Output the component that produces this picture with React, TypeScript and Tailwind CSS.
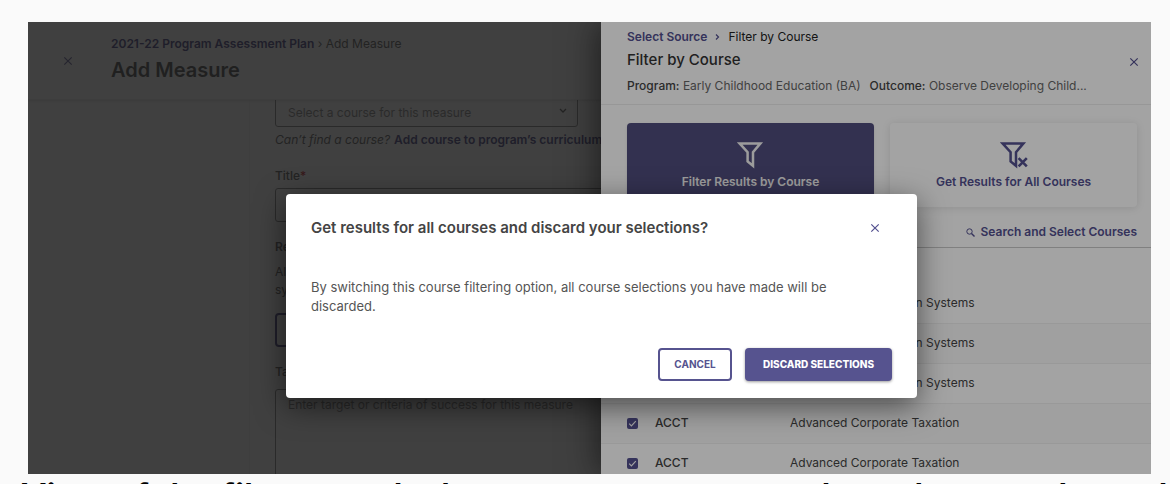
import React from "react";

const courses = [
  { code: "ACCT", name: "Accounting Information Systems" },
  { code: "ACCT", name: "Accounting Information Systems" },
  { code: "ACCT", name: "Accounting Information Systems" },
  { code: "ACCT", name: "Advanced Corporate Taxation" },
  { code: "ACCT", name: "Advanced Corporate Taxation" },
];

function CloseIcon() {
  return (
    <svg width="10" height="10" viewBox="0 0 10 10" fill="none" stroke="currentColor" strokeWidth="1.2" aria-hidden="true">
      <path d="M1.3 1.3l7.4 7.4M8.7 1.3L1.3 8.7" />
    </svg>
  );
}

function FunnelIcon({ crossed = false }: { crossed?: boolean }) {
  return (
    <svg width="28" height="28" viewBox="0 0 28 28" fill="none" stroke="currentColor" strokeWidth="2.5" aria-hidden="true">
      <path d="M2.6 2.4h20.8l-7.4 8.8v13.6L10.6 20.4v-9.2z" />
      {crossed && <path d="M18.6 17.2l8.2 8.2M26.8 17.2l-8.2 8.2" strokeWidth="2.6" />}
    </svg>
  );
}

function AddMeasurePage() {
  return (
    <div className="flex h-full flex-col bg-white text-[#444]">
      <header className="z-10 flex h-[78px] shrink-0 items-center border-b border-[#eee] shadow-sm">
        <button aria-label="Close" className="mr-[38px] ml-[35px] flex size-[10px] items-center justify-center text-[#53508f]">
          <CloseIcon />
        </button>
        <div>
          <nav className="text-[12px] leading-4">
            <a href="#plan" className="font-semibold text-[#2c2870]">2021-22 Program Assessment Plan</a>
            <span> › Add Measure</span>
          </nav>
          <h1 className="mt-[2px] text-[20px] leading-8 font-semibold text-[#333]">Add Measure</h1>
        </div>
      </header>
      <form className="ml-[221px] min-h-0 flex-1 overflow-hidden border-l border-[#f7f7f7] pl-[25px] text-[12px]">
        <div className="relative -mt-2 w-[303px]">
          <select aria-label="Course" className="h-[35px] w-full appearance-none rounded-[3px] border border-[#777] pt-[6px] pl-3 text-[12px] text-[#777]">
            <option>Select a course for this measure</option>
          </select>
          <svg className="absolute top-4 right-[11px]" width="8" height="6" viewBox="0 0 8 6" fill="none" stroke="currentColor" strokeWidth="1.3">
            <path d="M1 1l3 3 3-3" />
          </svg>
        </div>
        <p className="mt-[5px] leading-4 whitespace-nowrap">
          <em>Can’t find a course?</em>
          <a href="#add-course" className="ml-1 font-semibold text-[#2c2870]">Add course to program’s curriculum</a>
        </p>
        <label htmlFor="measure-title" className="mt-5 block leading-4 font-medium">
          Title<span className="text-red-700">*</span>
        </label>
        <input id="measure-title" className="mt-1 block h-[34px] w-full rounded-[3px] border border-[#777]" />
        <h2 className="mt-[17px] leading-4 font-semibold">Results</h2>
        <p className="mt-2 w-[240px] leading-[18px]">
          Align results that are in the<br />system
        </p>
        <button type="button" className="mt-[14px] block h-[34px] w-[160px] rounded-[4px] border-2 border-[#2c2870]">Select Source</button>
        <label htmlFor="measure-target" className="mt-[17px] block leading-4 font-medium">Target</label>
        <textarea
          id="measure-target"
          placeholder="Enter target or criteria of success for this measure"
          className="mt-[9px] block h-[120px] w-full rounded-[3px] border border-[#777] px-3 py-[7px] text-[12px] leading-4 placeholder:text-[#777]"
        />
      </form>
    </div>
  );
}

function FilterDrawer() {
  return (
    <aside className="absolute inset-y-0 right-0 flex w-[550px] flex-col bg-white text-[#444] shadow-[-4px_0_30px_rgba(0,0,0,0.5)]">
      <header className="flex h-[83px] shrink-0 items-center border-b border-[#ececec] pr-3 pb-[2px] pl-[26px]">
        <div className="min-w-0 flex-1">
          <nav className="flex items-center gap-[8px] text-[12px] leading-4">
            <a href="#source" className="font-semibold text-[#53508f]">Select Source</a>
            <svg width="5" height="8" viewBox="0 0 5 8" fill="none" stroke="#53508f" strokeWidth="1.2"><path d="M1 1.5l2.5 2.5L1 6.5" /></svg>
            <span className="text-[#222]">Filter by Course</span>
          </nav>
          <h2 className="mt-[3px] text-[15px] leading-6 font-medium text-[#333]">Filter by Course</h2>
          <p className="mt-1 text-[12px] leading-5 whitespace-nowrap text-[#666]">
            <span className="font-medium text-[#444]">Program:</span> Early Childhood Education (BA)
            <span className="ml-[9px] font-medium text-[#444]">Outcome:</span> Observe Developing Child...
          </p>
        </div>
        <button aria-label="Close filter" className="flex size-[10px] items-center justify-center text-[#53508f]">
          <CloseIcon />
        </button>
      </header>
      <div className="grid grid-cols-2 gap-4 pt-[18px] pr-[14px] pl-[26px] text-[12px] font-semibold">
        <button className="flex h-[84px] flex-col items-center rounded-[4px] bg-[#514e7d] pt-[18px] text-[#f4f4f4] shadow">
          <FunnelIcon />
          <span className="mt-[5px] leading-4">Filter Results by Course</span>
        </button>
        <button className="flex h-[84px] flex-col items-center rounded-[4px] pt-[18px] text-[#53508f] shadow-[0_1px_8px_rgba(0,0,0,0.12)]">
          <FunnelIcon crossed />
          <span className="mt-[5px] leading-4">Get Results for All Courses</span>
        </button>
      </div>
      <div className="mt-[17px] flex h-6 shrink-0 items-start justify-end border-b border-[#c8c8c8] pr-[14px]">
        <button className="flex items-center gap-[6px] text-[12px] leading-4 font-semibold text-[#53508f]">
          <svg width="9" height="9" viewBox="0 0 9 9" fill="none" stroke="currentColor"><circle cx="3.5" cy="3.5" r="2.7" /><path d="M5.5 5.5l3 3" strokeWidth="1.4" /></svg>
          Search and Select Courses
        </button>
      </div>
      <table className="mt-[35px] w-full shrink-0 table-fixed text-left text-[12px]">
        <tbody>
          {courses.map((course, i) => (
            <tr key={i} className="h-10 border-b border-[#f0f0f0] even:bg-[#fafafa]">
              <td className="w-[54px] pl-[26px]">
                <span className="relative block size-[11px]">
                  <input type="checkbox" defaultChecked aria-label={course.name} className="block size-[11px] appearance-none rounded-[2px] bg-[#53508f]" />
                  <svg className="pointer-events-none absolute inset-0" width="11" height="11" viewBox="0 0 11 11" fill="none" stroke="white" strokeWidth="1.2"><path d="M2.2 5.6l2.2 2.2 4.4-4.6" /></svg>
                </span>
              </td>
              <td className="w-[135px] font-medium">{course.code}</td>
              <td>{course.name}</td>
            </tr>
          ))}
        </tbody>
      </table>
    </aside>
  );
}

function DiscardDialog() {
  return (
    <section
      role="dialog"
      aria-modal="true"
      aria-labelledby="dialog-title"
      className="absolute top-[172px] left-[258px] w-[631px] rounded-[4px] bg-white px-[25px] pt-[22px] pb-[17px] text-[#444] shadow-[0_8px_30px_rgba(0,0,0,0.55)]"
    >
      <div className="flex items-center justify-between pr-3">
        <h2 id="dialog-title" className="text-[15px] leading-6 font-semibold">Get results for all courses and discard your selections?</h2>
        <button aria-label="Close dialog" className="text-[#53508f]"><CloseIcon /></button>
      </div>
      <p className="mt-[38px] text-[13px] leading-[19px] text-[#555]">
        By switching this course filtering option, all course selections you have made will be discarded.
      </p>
      <div className="mt-8 flex justify-end gap-[13px] text-[10px]">
        <button className="h-[33px] w-[74px] rounded-[4px] border-2 border-[#56538f] font-bold text-[#56538f]">CANCEL</button>
        <button className="h-[33px] w-[147px] rounded-[4px] bg-[#56538f] font-extrabold text-white shadow-[0_1px_3px_rgba(0,0,0,0.4)]">DISCARD SELECTIONS</button>
      </div>
    </section>
  );
}

export default function App() {
  return (
    <div className="flex h-screen flex-col overflow-hidden bg-[#fafafa] pt-[22px] font-['Inter','Liberation_Sans',sans-serif]">
      <div className="relative mr-[19px] ml-7 min-h-0 flex-1 overflow-hidden">
        <AddMeasurePage />
        <div className="absolute inset-0 z-10 bg-[#333]/76" />
        <div className="absolute inset-0 z-20">
          <FilterDrawer />
          <div className="absolute inset-0 bg-black/36" />
          <DiscardDialog />
        </div>
      </div>
      <p className="h-[10px] shrink-0 pl-[21px] text-[35px] leading-[44px] font-semibold whitespace-nowrap text-black">
        View of the filter panel where you can use a and reach a couple each
      </p>
    </div>
  );
}
